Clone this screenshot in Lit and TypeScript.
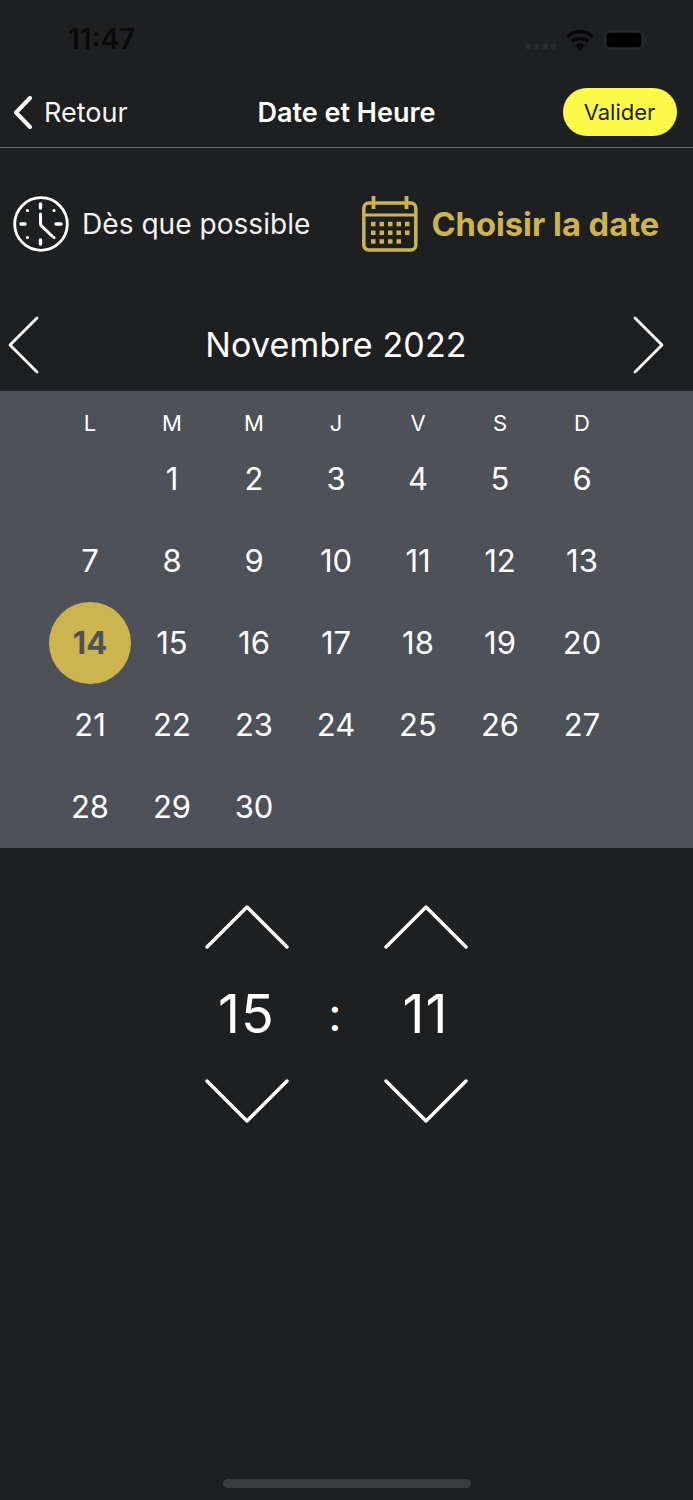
import { LitElement, html, css, svg } from "lit";
import { customElement } from "lit/decorators.js";

const WEEK = ["L", "M", "M", "J", "V", "S", "D"];

const chevron = (d: string, w: number, h: number, sw: number) => html`
  <svg width=${w} height=${h} viewBox="0 0 ${w} ${h}" fill="none" stroke="currentColor" stroke-width=${sw} stroke-linecap="round" stroke-linejoin="round">
    ${svg`<path d=${d} />`}
  </svg>`;

const clock = html`
  <svg class="ic" width="56" height="56" viewBox="0 0 56 56" fill="none" stroke="#fff" stroke-linecap="round">
    <circle cx="28" cy="28" r="26.300" stroke-width="2.800" />
    <path d="M27.500 18v9.500q0 1.500 1.200 2.700l10.300 9.800" stroke-width="3" />
    <path d="M27.500 8v4M27.500 44v4M8 28h4M43 28h5" stroke-width="3.400" />
    <path d="M14.500 14.500h.01M41 14.500h.01M14.500 41.500h.01M41 41.500h.01" stroke-width="3.200" />
  </svg>`;

const dots: [number, number][] = [];
[
  [9, 17.5, 26, 34.5, 43],
  [9, 17.5, 26, 34.5, 43],
  [9, 17.5, 26, 34.5],
].forEach((xs, r) => xs.forEach((x) => dots.push([x, r])));

const calendar = html`
  <svg class="ic" width="56" height="56" viewBox="0 0 56 56" fill="none" stroke="#ccb54e">
    <rect x="1.800" y="7" width="52" height="47" rx="5" stroke-width="3.500" />
    <path d="M2 19h52" stroke-width="3" />
    <path d="M11.500 0v13M44.500 0v13" stroke-width="3.800" />
    ${dots.map(
      ([x, r]) => svg`<rect x=${x} y=${25.8 + r * 8.7} width="4.500" height="4.500" fill="#ccb54e" stroke="none" />`
    )}
  </svg>`;

@customElement("app-root")
export class AppRoot extends LitElement {
  static styles = css`
    :host {
      display: block;
      width: 693px;
      height: 1500px;
      background: #1e1f21;
      color: #fff;
      font-family: Inter, "Liberation Sans", sans-serif;
      overflow: hidden;
      position: relative;
    }
    .status {
      height: 78px;
      box-sizing: border-box;
      padding: 22px 45px 0 68px;
      display: flex;
      align-items: flex-start;
      justify-content: space-between;
      color: #0a0a0b;
    }
    .time {
      font-size: 28px;
      font-weight: 600;
      line-height: 35px;
    }
    .status-icons {
      display: flex;
      align-items: center;
      gap: 10px;
      height: 35px;
    }
    .signal {
      display: flex;
      gap: 3px;
      margin-top: 14px;
    }
    .signal i {
      width: 5.500px;
      height: 5.500px;
      border-radius: 50%;
      background: #2c2d2f;
    }
    .nav {
      height: 70px;
      display: grid;
      grid-template-columns: 1fr auto 1fr;
      align-items: center;
      border-bottom: 1px solid #6b6c6e;
      box-sizing: border-box;
      padding: 0 14px;
    }
    .back {
      display: flex;
      align-items: center;
      gap: 11px;
      margin-left: -2px;
      font-size: 27px;
      color: #f4f4f4;
      line-height: 34px;
    }
    .title {
      font-size: 27px;
      font-weight: 600;
      line-height: 34px;
    }
    .ok {
      justify-self: end;
      width: 114px;
      height: 48px;
      border-radius: 24px;
      background: #fdfb4a;
      color: #1e1f21;
      display: flex;
      align-items: center;
      justify-content: center;
      font-size: 22px;
      margin: 0 2px 2px 0;
      padding-right: 1px;
      box-sizing: border-box;
    }
    .modes {
      display: flex;
      align-items: center;
      height: 152px;
      padding: 0 0 0 13px;
      box-sizing: border-box;
    }
    .mode {
      display: flex;
      align-items: center;
      gap: 13px;
      font-size: 28.100px;
      color: #f2f2f2;
    }
    .mode.on {
      color: #ccb54e;
      font-weight: 700;
      font-size: 32.700px;
      margin-left: 52px;
    }
    .ic {
      flex: none;
    }
    .month {
      height: 91px;
      display: flex;
      align-items: center;
      justify-content: space-between;
      padding: 0 29px 2px 8px;
      box-sizing: border-box;
    }
    .month-label {
      font-size: 34px;
      flex: 1;
      text-align: center;
      line-height: 42px;
      letter-spacing: 0.15px;
    }
    .cal {
      background: #4e5158;
      height: 457px;
      box-sizing: border-box;
      padding: 16px 70px 0 49px;
      display: grid;
      grid-template-columns: repeat(7, 82px);
      grid-template-rows: 31px repeat(5, 82px);
    }
    .wd {
      font-size: 22px;
      display: flex;
      align-items: center;
      justify-content: center;
      color: #fff;
    }
    .d {
      font-size: 31px;
      display: flex;
      align-items: center;
      justify-content: center;
      box-sizing: border-box;
      padding-bottom: 2px;
    }
    .d.sel {
      background: #ccb54e;
      color: #4e5158;
      font-weight: 700;
      border-radius: 50%;
    }
    .picker {
      display: grid;
      grid-template-columns: 90px 89px 90px;
      justify-content: center;
      justify-items: center;
      padding: 57px 21px 0 0;
    }
    .spin {
      display: flex;
      flex-direction: column;
      align-items: center;
      color: #fff;
    }
    .num {
      font-size: 54px;
      line-height: 64px;
      height: 64px;
      margin: 33px 0 33px;
      font-weight: 400;
      letter-spacing: 1px;
    }
    .colon {
      font-size: 46px;
      font-weight: 400;
      line-height: 64px;
      align-self: center;
      margin-right: 2px;
    }
    .home {
      position: absolute;
      left: 223px;
      top: 1479px;
      width: 248px;
      height: 9px;
      border-radius: 5px;
      background: #3a3b3e;
    }
  `;

  render() {
    const cells: unknown[] = [html`<div></div>`];
    for (let i = 1; i <= 30; i++) {
      cells.push(html`<div class="d ${i === 14 ? "sel" : ""}">${i}</div>`);
    }
    return html`
      <div class="status">
        <span class="time">11:47</span>
        <div class="status-icons">
          <div class="signal"><i></i><i></i><i></i><i></i></div>
          <svg width="28" height="22" viewBox="0 0 28 22" fill="none" stroke="#08080a" stroke-width="3.400">
            <path d="M1.500 7.500c7-6.500 18-6.500 25 0" />
            <path d="M6 12.500c4.500-4 11.500-4 16 0" />
            <path d="M10.500 17c2-1.700 5-1.700 7 0" />
            <path d="M14 22l-3.500-3.500q3.500-2.500 7 0z" fill="#08080a" stroke="none" />
          </svg>
          <svg width="44" height="20" viewBox="0 0 44 20">
            <rect x="1" y="1" width="38" height="18" rx="5" fill="none" stroke="#2a2b2d" stroke-width="1.500" />
            <rect x="3" y="3" width="34" height="14" rx="3" fill="#020203" />
            <rect x="41" y="7" width="2" height="6" rx="1" fill="#2a2b2d" />
          </svg>
        </div>
      </div>

      <div class="nav">
        <div class="back">
          ${chevron("M18 2 4 16.500 18 31", 21, 33, 4)}
          <span>Retour</span>
        </div>
        <div class="title">Date et Heure</div>
        <div class="ok">Valider</div>
      </div>

      <div class="modes">
        <div class="mode">${clock}<span>Dès que possible</span></div>
        <div class="mode on">${calendar}<span>Choisir la date</span></div>
      </div>

      <div class="month">
        ${chevron("M29 2 2 29 29 56", 31, 58, 2.800)}
        <div class="month-label">Novembre 2022</div>
        ${chevron("M2 2 29 29 2 56", 31, 58, 2.800)}
      </div>

      <div class="cal">
        ${WEEK.map((w) => html`<div class="wd">${w}</div>`)}
        ${cells}
      </div>

      <div class="picker">
        <div class="spin">
          ${chevron("M2 42 42 2 82 42", 84, 44, 3.400)}
          <div class="num">15</div>
          ${chevron("M2 2 42 42 82 2", 84, 44, 3.400)}
        </div>
        <div class="colon">:</div>
        <div class="spin">
          ${chevron("M2 42 42 2 82 42", 84, 44, 3.400)}
          <div class="num">11</div>
          ${chevron("M2 2 42 42 82 2", 84, 44, 3.400)}
        </div>
      </div>

      <div class="home"></div>
    `;
  }
}
